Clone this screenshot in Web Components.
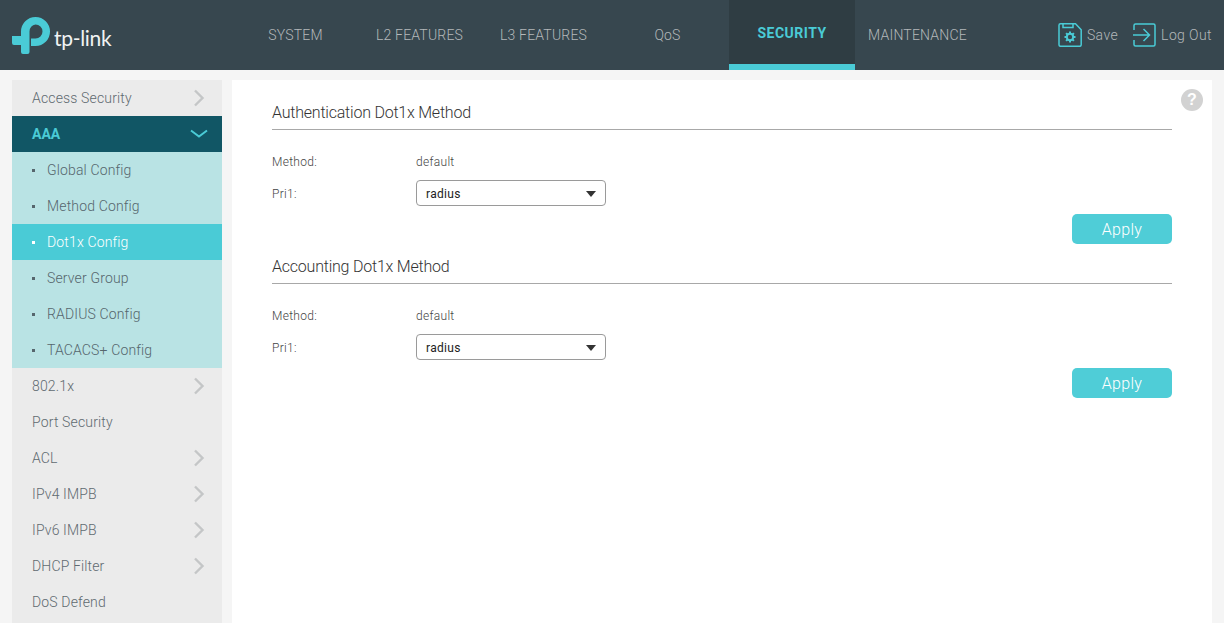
<!DOCTYPE html>
<html>
<head>
<meta charset="utf-8">
<title>tp-link</title>
<style>
html, body { margin: 0; padding: 0; height: 623px; overflow: hidden; background: #f5f5f5; font-family: Roboto, "Liberation Sans", Arial, sans-serif; font-weight: 300; }
</style>
</head>
<body>
<app-shell></app-shell>
<script>
class TopBar extends HTMLElement {
  constructor() {
    super();
    this.attachShadow({ mode: "open" });
  }
  connectedCallback() {
    const items = ["SYSTEM", "L2 FEATURES", "L3 FEATURES", "QoS", "SECURITY", "MAINTENANCE"];
    this.shadowRoot.innerHTML = `
<style>
:host { display: flex; height: 70px; background: #37474f; color: #b4b8ba; font-size: 14px; }
.logo { width: 234px; display: flex; align-items: center; box-sizing: border-box; padding-left: 12px; }
.logo span { color: #f1f3f3; font: 400 21px/1 "Lato", sans-serif; letter-spacing: -0.3px; margin: 4px 0 0 4px; }
nav { display: flex; margin-left: -1px; }
nav a { width: 124px; box-sizing: border-box; display: flex; align-items: center; justify-content: center; padding: 0 0 1px 1px; letter-spacing: .2px; }
nav a.on { width: 126px; background: #2f3d43; color: #4acbd6; font-weight: 700; border-bottom: 6px solid #4acbd6; padding: 1px 0 0; letter-spacing: .5px; }
.tools { margin-left: auto; display: flex; align-items: center; padding-right: 12px; letter-spacing: .4px; }
.tools a { display: flex; align-items: center; gap: 5px; margin-left: 15px; }
.tools a:last-child { gap: 4px; }
svg { display: block; }
</style>
<div class="logo">
  <svg width="38" height="37" viewBox="0 0 38 37">
    <path fill="#4acbd6" d="M9 14.500A14.500 14.500 0 0 1 23.500 0 14.500 14.500 0 0 1 23.500 29H19V21.500H23.500A7 7 0 0 0 23.500 7.500 7 7 0 0 0 17.500 14.500V35A2 2 0 0 1 15.500 37H11A2 2 0 0 1 9 35V28H2A2 2 0 0 1 0 26V19H9Z"/>
  </svg>
  <span>tp-link</span>
</div>
<nav>${items.map(t => `<a class="${t === "SECURITY" ? "on" : ""}">${t}</a>`).join("")}</nav>
<div class="tools">
  <a>
    <svg width="24" height="24" viewBox="0 0 24 24" fill="none" stroke="#4acbd6" stroke-width="1.500">
      <path d="M2.500 .8h15l5.700 6v15a1.500 1.500 0 0 1-1.500 1.500H2.500a1.500 1.500 0 0 1-1.500-1.500V2.300a1.500 1.500 0 0 1 1.500-1.500z"/>
      <path d="M5 1v3.500h10V1"/>
      <circle cx="12" cy="14" r="3.200" stroke-width="2"/>
      <path stroke-width="2" d="M12 8.500v2M12 17.500v2M6.500 14h2M15.500 14h2M8.100 10.100l1.400 1.400M14.500 16.500l1.400 1.400M15.900 10.100l-1.400 1.400M9.500 16.500l-1.400 1.400"/>
    </svg>
    <span>Save</span>
  </a>
  <a>
    <svg width="24" height="24" viewBox="0 0 24 24" fill="none" stroke="#4acbd6" stroke-width="1.500">
      <path d="M1 7V2.500A1.500 1.500 0 0 1 2.500 1h18A1.500 1.500 0 0 1 22 2.500v19a1.500 1.500 0 0 1-1.500 1.500h-18A1.500 1.500 0 0 1 1 21.500V17"/>
      <path d="M0 12h16M10.500 6l6 6-6 6"/>
    </svg>
    <span>Log Out</span>
  </a>
</div>`;
  }
}
customElements.define("top-bar", TopBar);

class SideMenu extends HTMLElement {
  constructor() {
    super();
    this.attachShadow({ mode: "open" });
  }
  connectedCallback() {
    const chev = `<svg class="chev" width="12" height="18" viewBox="0 0 12 18" fill="none" stroke="#c4c6c7" stroke-width="2.400"><path d="M2 1.500l7.500 7.500-7.500 7.500"/></svg>`;
    const down = `<svg class="chev down" width="18" height="10" viewBox="0 0 18 10" fill="none" stroke="#4acbd6" stroke-width="2"><path d="M1 1.500l8 6 8-6"/></svg>`;
    const top = (t, c) => `<div class="row">${t}${c ? chev : ""}</div>`;
    const sub = (t, c) => `<div class="row sub ${c || ""}"><i></i>${t}</div>`;
    this.shadowRoot.innerHTML = `
<style>
:host { display: block; width: 210px; background: #ebebeb; color: #5f6a70; font-size: 14px; letter-spacing: .15px; }
.row { height: 36px; box-sizing: border-box; display: flex; align-items: center; padding: 0 17px 0 20px; justify-content: space-between; }
.row.open { background: #115665; color: #4acbd6; font-weight: 700; letter-spacing: 0; }
.row.sub { background: #b9e3e4; justify-content: flex-start; color: #56666d; }
.row.sub.on { background: #4acbd6; color: #fff; }
.sub i { width: 3px; height: 3px; background: currentColor; margin-right: 12px; }
.down { margin-right: -3px; }
</style>
${top("Access Security", 1)}
<div class="row open">AAA${down}</div>
${sub("Global Config")}
${sub("Method Config")}
${sub("Dot1x Config", "on")}
${sub("Server Group")}
${sub("RADIUS Config")}
${sub("TACACS+ Config")}
${top("802.1x", 1)}
${top("Port Security")}
${top("ACL", 1)}
${top("IPv4 IMPB", 1)}
${top("IPv6 IMPB", 1)}
${top("DHCP Filter", 1)}
${top("DoS Defend")}`;
  }
}
customElements.define("side-menu", SideMenu);

class MethodPanel extends HTMLElement {
  constructor() {
    super();
    this.attachShadow({ mode: "open" });
  }
  connectedCallback() {
    const title = this.getAttribute("heading");
    this.shadowRoot.innerHTML = `
<style>
:host { display: block; color: #444; font-size: 12px; letter-spacing: .3px; }
h2 { margin: 0; height: 36px; box-sizing: border-box; padding-top: 9px; font-size: 16px; line-height: 20px; font-weight: 300; color: #333; border-bottom: 1px solid #a8a8a8; letter-spacing: -.22px; }
.form { display: grid; grid-template-columns: 144px 190px; grid-template-rows: 32px 32px; margin-top: 15px; align-items: center; }
.form span { padding-top: 2px; }
.sel { height: 26px; box-sizing: border-box; border: 1px solid #9a9a9a; border-radius: 4px; display: flex; align-items: center; justify-content: space-between; padding: 2px 9px 0; color: #222; font-weight: 400; }
.sel b { width: 0; height: 0; border-left: 5px solid transparent; border-right: 5px solid transparent; border-top: 6px solid #333; }
.foot { display: flex; justify-content: flex-end; margin-top: 5px; }
button { width: 100px; height: 30px; padding: 0; border: 0; border-radius: 5px; background: #4fcdd7; color: #fff; font: 300 16px Roboto, "Liberation Sans", Arial, sans-serif; letter-spacing: .3px; }
</style>
<h2>${title}</h2>
<div class="form">
  <span>Method:</span><span>default</span>
  <span>Pri1:</span><div class="sel">radius<b></b></div>
</div>
<div class="foot"><button>Apply</button></div>`;
  }
}
customElements.define("method-panel", MethodPanel);

class AppShell extends HTMLElement {
  constructor() {
    super();
    this.attachShadow({ mode: "open" });
  }
  connectedCallback() {
    this.shadowRoot.innerHTML = `
<style>
:host { display: block; height: 623px; overflow: hidden; }
.body { display: flex; gap: 10px; padding: 10px 12px 0; }
main { position: relative; flex: 1; height: 700px; background: #fff; padding: 14px 40px 0; box-sizing: border-box; display: flex; flex-direction: column; gap: 4px; }
.help { position: absolute; top: 9px; right: 9px; width: 22px; height: 22px; border-radius: 50%; background: #d2d2d2; color: #fff; font: 700 16px/22px "Liberation Sans", sans-serif; text-align: center; }
</style>
<top-bar></top-bar>
<div class="body">
  <side-menu></side-menu>
  <main>
    <div class="help">?</div>
    <method-panel heading="Authentication Dot1x Method"></method-panel>
    <method-panel heading="Accounting Dot1x Method"></method-panel>
  </main>
</div>`;
  }
}
customElements.define("app-shell", AppShell);
</script>
</body>
</html>
